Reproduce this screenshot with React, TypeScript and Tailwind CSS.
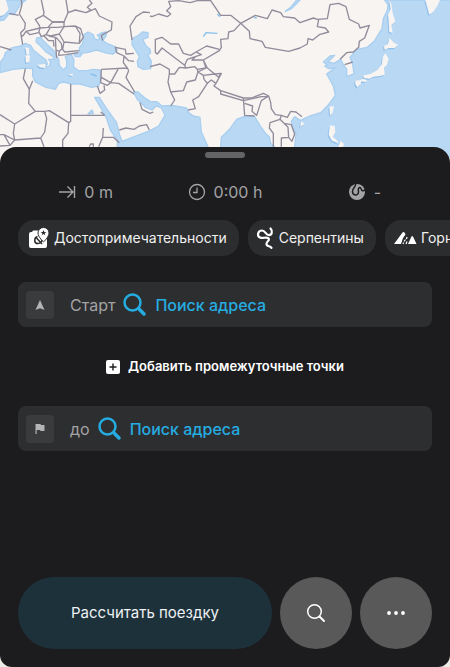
import type { ReactNode } from "react";

const WATER = [
  "M18 0L78 0 62 12 50 32 42 44 26 42 12 60 0 62 0 48 14 46 26 32 18 14Z",
  "M0 188L12 172 16 158 35 144 62 138 76 130 92 136 100 150 122 168 138 180 142 192 136 204 148 198 152 186 146 178 162 178 160 170 136 154 122 138 108 126 110 114 122 112 130 122 146 138 162 152 168 166 176 178 178 196 190 210 200 200 200 182 196 170 214 164 222 180 220 200 236 212 262 212 280 208 300 210 304 232 296 258 274 262 240 252 215 252 190 246 176 250 166 268 138 262 106 246 98 228 98 206 76 204 40 208 0 218Z",
  "M252 104L264 96 280 104 284 116 294 120 300 114 292 106 306 98 320 96 318 108 308 122 324 132 346 140 352 150 340 162 322 160 290 150 262 158 240 160 238 144 248 130Z",
  "M222 164L236 158 246 162 240 170 226 170Z",
  "M396 116L412 108 428 96 444 98 444 112 428 118 438 138 450 148 452 158 444 166 454 184 452 206 430 208 414 200 412 184 418 170 406 150 396 134Z",
  "M284 292L298 292 320 326 350 368 358 402 366 424 450 392 476 378 495 345 484 324 468 318 456 330 436 322 412 298 400 276 414 276 432 292 450 304 472 306 486 318 516 316 560 324 566 338 580 348 600 352 604 396 624 440 624 470 352 470 352 420 332 392 320 356 304 326Z",
  "M660 470L664 412 690 386 710 358 738 348 764 350 782 380 798 402 808 410 812 430 822 438 836 470Z",
  "M1154 0L1164 14 1162 30 1150 56 1146 86 1124 122 1102 142 1070 148 1050 172 1058 192 1062 222 1040 230 1040 208 1028 190 1022 178 1002 190 984 186 1004 166 990 168 970 186 982 194 974 198 986 206 1006 204 994 212 980 222 1000 258 1006 286 984 316 962 338 930 348 912 356 902 362 884 350 874 364 878 382 888 402 884 440 870 470 1360 470 1360 0Z",
  "M856 34L874 26 900 0 890 0 872 22Z",
  "M264 342L276 330 280 340Z",
];

const ISLANDS = [
  "M76 142L86 144 88 162 80 166Z",
  "M76 166L90 166 88 186 78 188Z",
  "M112 194L136 192 136 204 120 202Z",
  "M204 222L220 222 216 228Z",
  "M0 0L18 0 26 30 10 46 0 48Z",
  "M1168 0L1174 12 1178 40 1186 64 1174 76 1178 98 1168 96 1166 62 1164 44 1172 28Z",
  "M1168 114L1182 128 1194 134 1184 144 1166 144 1154 150 1152 138 1164 132Z",
  "M1156 160L1166 176 1160 196 1152 204 1154 224 1140 228 1120 230 1108 236 1092 234 1090 226 1112 222 1132 210 1146 192 1148 172Z",
  "M1086 236L1102 240 1096 246 1082 244Z",
  "M1066 242L1084 240 1082 252 1072 262 1066 252Z",
  "M1276 0L1288 44 1300 36 1312 18 1320 0Z",
  "M988 320L1002 318 998 338 990 346Z",
  "M990 376L1004 378 1006 396 998 410 1010 420 1016 430 996 422 986 404Z",
  "M1022 422L1032 432 1026 450 1010 450Z",
  "M904 364L914 372 900 380Z",
];

const BORDERS = [
  "M64 0L66 14 58 42 76 70 74 86 62 98 64 110 70 106 78 94 120 84M28 40L56 46M64 110L68 134M0 140L34 150M124 0L132 38 130 46 106 58 118 76 120 84 144 82 158 66 130 46",
  "M198 0L204 38 192 66 158 66M144 82L174 82 192 80 192 66M204 38L226 30 258 38 272 30 262 22 276 10 268 0M258 38L286 26 298 48 336 66 334 90 304 106 308 122",
  "M78 94L90 104 116 98 120 84M118 98L124 110 138 104 150 84M138 104L152 108 178 102 192 80M158 66L194 66M178 102L192 126 238 130 250 112 242 86 226 78 192 80M226 78L240 100 238 128M130 106L146 122 160 122 162 140M146 108L166 112 168 150 178 154 186 146 184 130 168 112M192 126L188 148 194 156 238 152M178 154L176 166 198 164 234 158M168 150L170 174",
  "M76 206L70 236 88 268 86 310 106 334 44 372 0 344M88 268L98 242M106 334L134 334 140 356 134 396 122 414 44 420 40 400 44 372M134 334L148 332 206 368 212 364 212 252M212 346L314 346M206 368L204 400 188 420 188 450M122 414L132 440M0 404L12 404 44 420 30 436 12 404M0 438L30 436M314 346L302 336M310 384L308 412 340 412 358 428M308 412L296 440M268 440L272 432 280 432 280 440",
  "M304 208L382 204 386 212M382 204L370 188 372 168 350 158 346 142 376 148 378 162 402 160M372 168L386 182 402 184M386 212L378 232 404 276M304 232L332 248 354 208M304 208L302 248 322 256 332 248 356 250 402 282M292 258L300 280 314 270 312 256M358 390L378 384 402 388 418 378 440 374 448 390M420 308L426 328 450 340 460 336",
  "M450 48L456 50 476 42 502 50 512 42 500 32 512 20 506 4 536 2 570 8 592 2 632 2 662 46 692 46 722 70 702 92 686 96 684 116 662 118 664 142 658 152 610 180",
  "M722 70L766 46 802 56 816 30 842 38 850 50 884 54 900 68 940 54 952 58 982 56 990 14 1016 10 1038 20 1048 58 1076 72 1080 84 1108 76 1094 114 1078 124 1076 142 1060 156 1040 158 1020 178",
  "M722 70L748 94 750 116 786 124 796 142 866 154 900 144 922 132 924 116 938 120 958 104 986 96 976 84 952 80 956 58",
  "M396 120L390 78 408 50 430 36 450 38M466 158L466 118 486 112 512 132 536 132 550 160 572 166 588 156 620 138 658 148M466 158L472 162 486 144 554 196 562 178 586 170 604 164 588 156M554 196L558 204 584 200 592 208M586 170L576 180 610 180 618 204 592 208 594 216 586 240 560 246 550 272 510 276M558 204L538 202 524 222 508 222 508 208 480 192 450 200M508 222L504 246 512 276 524 300 512 318M610 180L622 204 644 222 664 220 648 250 642 258 662 272 730 294 754 294 790 280 806 288 812 308 814 326 826 344 844 346",
  "M618 204L594 216 610 226 612 238 622 250 596 290 578 300 586 326 564 330M610 226L644 222 656 232 662 220M622 250L634 240 648 250M662 272L662 282 730 302 784 290 806 290M730 294L734 346 764 348M734 310L758 318 756 334 770 346 784 302 806 288",
  "M844 346L862 352 872 334 888 336 906 350M844 346L840 358 852 370 874 374 884 402 876 424 866 412 844 414 844 440M840 358L810 368 808 384 820 400 820 440M852 370L864 382 866 412M1034 194L1058 186",
];

function WorldMap() {
  return (
    <svg viewBox="0 0 1350 480" preserveAspectRatio="xMidYMin slice" className="block h-40 w-full bg-[#f7f4f1]" role="img" aria-label="Карта">
      <g fill="#b9d8f4" stroke="#a9cff0" strokeWidth="4" strokeLinejoin="round">
        {WATER.map((d) => <path key={d} d={d} />)}
      </g>
      <g fill="#91c0ea" transform="translate(-3 4)">
        {ISLANDS.map((d) => <path key={d} d={d} />)}
      </g>
      <g fill="#f7f4f1">
        {ISLANDS.map((d) => <path key={d} d={d} />)}
      </g>
      <g fill="none" stroke="#85c0ec" strokeWidth="4">
        <path d="M610 110L618 98 652 100M652 42L660 50M762 52L770 54M272 222L290 228" />
      </g>
      <g fill="none" stroke="#918c9b" strokeWidth="4" strokeLinejoin="round">
        {BORDERS.map((d) => <path key={d} d={d} />)}
      </g>
    </svg>
  );
}

function Stat({ icon, children }: { icon: ReactNode; children: ReactNode }) {
  return (
    <div className="flex items-center justify-center gap-2 text-base leading-5 text-[#a3a3a5]">
      {icon}
      <span>{children}</span>
    </div>
  );
}

function Chip({ icon, children }: { icon: ReactNode; children: ReactNode }) {
  return (
    <button type="button" className="flex h-9 shrink-0 items-center gap-1 rounded-2xl bg-[#2c2d2f] pl-2 pr-3 text-sm text-[#f0f0f0]">
      {icon}
      {children}
    </button>
  );
}

function AddressField({ id, label, icon }: { id: string; label: string; icon: ReactNode }) {
  return (
    <div className="flex h-[45px] items-center rounded-lg bg-[#2d2e30] px-2">
      <span className="flex size-7 shrink-0 items-center justify-center rounded bg-[#3a3b3d] text-[#b4b4b4]">{icon}</span>
      <label htmlFor={id} className="ml-4 flex shrink-0 items-center gap-2 text-base text-[#a3a3a5]">
        {label}
        <svg viewBox="0 0 24 24" className="size-6 text-[#25ace0]" fill="none" stroke="currentColor" strokeLinecap="round" aria-hidden="true">
          <circle cx="9.500" cy="9.500" r="8" strokeWidth="2.500" />
          <path d="M15.500 15.500L21 21" strokeWidth="3.500" />
        </svg>
      </label>
      <input
        id={id}
        type="text"
        placeholder="Поиск адреса"
        className="ml-2 min-w-0 flex-1 bg-transparent text-base font-medium text-[#25ace0] outline-none placeholder:text-[#25ace0]"
      />
    </div>
  );
}

export default function App() {
  return (
    <div className="flex min-h-screen flex-col bg-[#eeece7] font-['Inter','Liberation_Sans',sans-serif]">
      <WorldMap />
      <main className="relative -mt-[13px] flex flex-1 flex-col overflow-hidden rounded-t-2xl rounded-b-xl bg-[#1c1c1e] pb-[18px]">
        <div className="mx-auto mt-[5px] h-[6px] w-10 rounded-full bg-[#646466]" />

        <div className="mt-6 grid grid-cols-3 px-4">
          <Stat
            icon={
              <svg viewBox="0 0 18 18" className="size-[18px]" fill="none" stroke="currentColor" strokeWidth="1.400" aria-hidden="true">
                <path d="M1 9H15M9.500 3.500L15 9L9.500 14.500M16.500 3V15" />
              </svg>
            }
          >
            0 m
          </Stat>
          <Stat
            icon={
              <svg viewBox="0 0 18 18" className="size-[18px]" fill="none" stroke="currentColor" strokeWidth="1.300" aria-hidden="true">
                <circle cx="9" cy="9" r="7.500" />
                <path d="M9 4.500V9.500H5" />
              </svg>
            }
          >
            0:00 h
          </Stat>
          <Stat
            icon={
              <svg viewBox="0 0 18 18" className="size-[18px]" aria-hidden="true">
                <circle cx="9" cy="9" r="8" fill="currentColor" />
                <path d="M7.500 .500C8.500 3.500 4.500 4.500 4.500 8.500C4.500 13 10.500 13 10.500 9C10.500 7 9.500 5 11.500 4.500C13.500 4.200 13 7.500 14.500 7.800C15.500 8 16.500 7.500 17.500 6.500" fill="none" stroke="#1c1c1e" strokeWidth="1.500" />
              </svg>
            }
          >
            -
          </Stat>
        </div>

        <div className="mt-[18px] flex gap-[9px] overflow-x-auto pl-[18px] [scrollbar-width:none]">
          <Chip
            icon={
              <svg viewBox="0 0 24 24" className="size-6" aria-hidden="true">
                <path d="M3 8Q3 6 5 6H6L7 4.500H14L20 12H21V20Q21 22 19 22H5Q3 22 3 20Z" fill="#fff" />
                <path d="M17.500 1.500A5.500 5.500 0 0 1 23 7C23 11 17.500 16 17.500 16S12 11 12 7A5.500 5.500 0 0 1 17.500 1.500Z" fill="#fff" stroke="#2c2d2f" strokeWidth="1" />
                <path d="M17.500 4L18.300 6H20.400L18.700 7.300 19.300 9.300 17.500 8.100 15.700 9.300 16.300 7.300 14.600 6H16.700Z" fill="#2c2d2f" />
                <path d="M11.500 10.500C8 11.500 7.500 17.500 12 17.500C14.500 17.500 16 15.500 16 14M16 18L10.500 12" fill="none" stroke="#2c2d2f" strokeWidth="1.500" />
              </svg>
            }
          >
            Достопримечательности
          </Chip>
          <Chip
            icon={
              <svg viewBox="0 0 19 24" className="h-6 w-[19px]" fill="none" stroke="#fff" strokeWidth="2.200" strokeLinecap="round" aria-hidden="true">
                <path d="M14.500 2.500C17 5 16 9.500 12.500 9C9.500 8.500 9.500 4.500 6 4.500C1.500 4.500 .800 10 4 11.500C7 13 9.500 10.500 12 12C15 14 9.500 16 10.500 18.500C11.500 21 14 19.500 15.500 21.800" />
              </svg>
            }
          >
            Серпентины
          </Chip>
          <Chip
            icon={
              <svg viewBox="0 0 24 24" className="size-6" aria-hidden="true">
                <path d="M1 18L9.500 6.500Q10.500 5.500 11.500 6.500L12.500 8.500L10 12L8 18ZM15 18L18.500 10.500Q19.200 9.500 20 10.500L23.500 18Z" fill="#fff" />
                <path d="M14 11L13.500 13M12.500 13.500L11 15.500M10.500 16.500L10 18M14 15.500L13 18" fill="none" stroke="#fff" strokeWidth="1.200" />
              </svg>
            }
          >
            Горные
          </Chip>
        </div>

        <div className="mt-[26px] px-[18px]">
          <AddressField
            id="route-start"
            label="Старт"
            icon={<svg viewBox="0 0 12 12" className="size-3" aria-hidden="true"><path d="M6 1L10.500 11L6 9.200L1.500 11Z" fill="currentColor" /></svg>}
          />
          <div className="flex h-[79px] items-center justify-center">
            <button type="button" className="flex items-center gap-2 text-[13px] font-semibold text-white">
              <svg viewBox="0 0 14 14" className="size-[14px]" aria-hidden="true">
                <rect width="14" height="14" rx="2" fill="#fff" />
                <path d="M7 3.500V10.500M3.500 7H10.500" stroke="#1c1c1e" strokeWidth="1.400" />
              </svg>
              Добавить промежуточные точки
            </button>
          </div>
          <AddressField
            id="route-end"
            label="до"
            icon={<svg viewBox="0 0 12 12" className="size-3" aria-hidden="true"><path d="M1.500 1H6.500L7 2H10.500V8H6.500L6 7H2.700V11H1.500Z" fill="currentColor" /></svg>}
          />
        </div>

        <div className="mt-auto flex gap-2 px-[18px] pt-6">
          <button type="button" className="h-[72px] min-w-0 flex-1 rounded-full bg-[#1d313b] text-[15px] text-[#eef2f4]">
            Рассчитать поездку
          </button>
          <button type="button" aria-label="Поиск" className="flex size-[72px] shrink-0 items-center justify-center rounded-full bg-[#59595a]">
            <svg viewBox="0 0 20 20" className="size-5" fill="none" stroke="#fff" strokeLinecap="round" aria-hidden="true">
              <circle cx="8.500" cy="8.500" r="6.800" strokeWidth="1.500" />
              <path d="M13.500 13.500L18 18" strokeWidth="2" />
            </svg>
          </button>
          <button type="button" aria-label="Ещё" className="flex size-[72px] shrink-0 items-center justify-center rounded-full bg-[#59595a]">
            <svg viewBox="0 0 20 20" className="size-5" fill="#fff" aria-hidden="true">
              <circle cx="3" cy="10" r="1.900" />
              <circle cx="10" cy="10" r="1.900" />
              <circle cx="17" cy="10" r="1.900" />
            </svg>
          </button>
        </div>
      </main>
    </div>
  );
}
